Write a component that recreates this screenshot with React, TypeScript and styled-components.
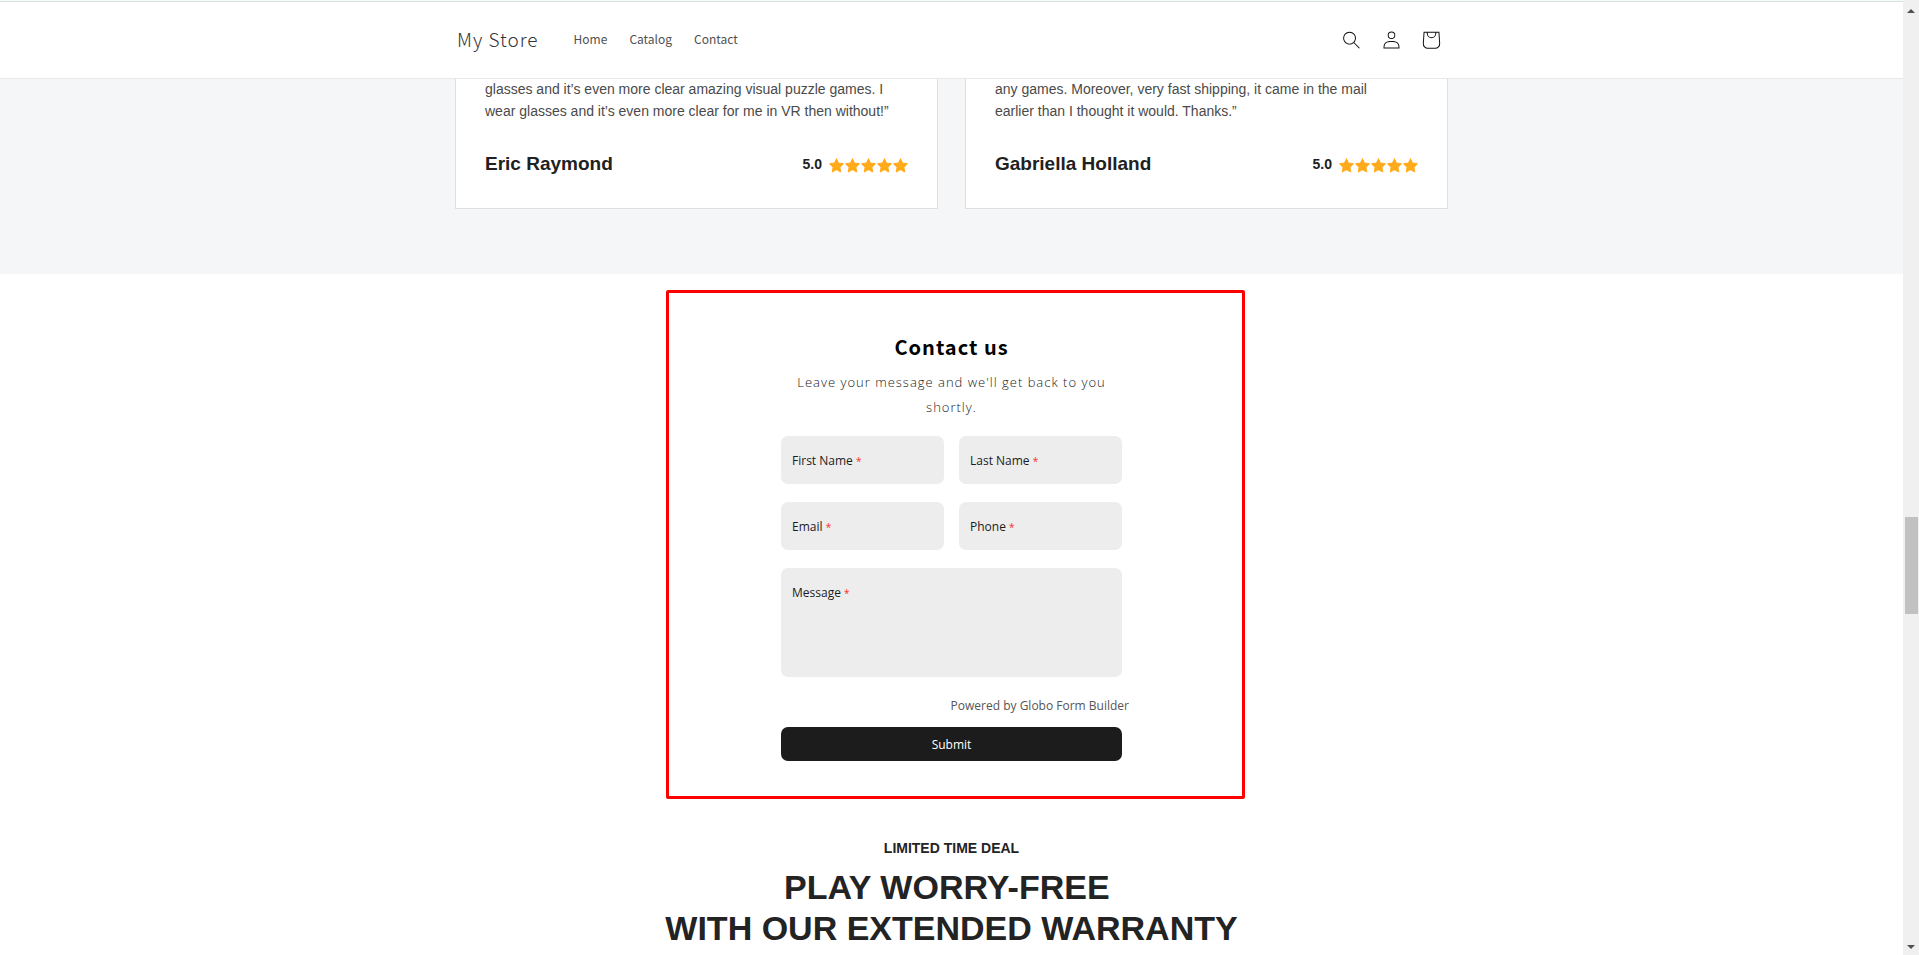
import React from "react";
import styled, { createGlobalStyle } from "styled-components";

const GlobalStyle = createGlobalStyle`
  *, *::before, *::after { box-sizing: border-box; }
  body { margin: 0; background: #fff; }
  h1, h2, h3, p, ul { margin: 0; padding: 0; }
`;

const storeFont = `"Noto Sans CJK SC", "Noto Sans", sans-serif`;
const bodyFont = `"Liberation Sans", Arial, sans-serif`;
const formFont = `"Open Sans", "Noto Sans", sans-serif`;

const Viewport = styled.div`
  display: grid;
  grid-template-columns: 1fr 16px;
  height: 100vh;
  overflow: hidden;
`;

const Page = styled.div`
  min-width: 0;
  min-height: 0;
  overflow: hidden;
`;

const TopStrip = styled.div`
  height: 2px;
  border-bottom: 1px solid #d8e2e1;
  background: #f3faf8;
`;

const Header = styled.header`
  border-bottom: 1px solid #e8e8e8;
  background: #fff;
`;

const Container = styled.div`
  width: 100%;
  max-width: 993px;
  margin: 0 auto;
`;

const HeaderRow = styled(Container)`
  display: flex;
  align-items: center;
  height: 76px;
  padding-left: 2px;
  font-family: ${storeFont};
`;

const Brand = styled.a`
  padding-bottom: 2px;
  color: #333;
  font-size: 19px;
  font-weight: 300;
  line-height: 32px;
  letter-spacing: 1px;
  text-decoration: none;
`;

const Nav = styled.nav`
  display: flex;
  gap: 22px;
  margin-left: 35px;
  padding-bottom: 2px;
`;

const NavLink = styled.a`
  color: #505050;
  font-size: 12px;
  line-height: 20px;
  text-decoration: none;
`;

const HeaderIcons = styled.div`
  display: flex;
  margin: 0 -3px 0 auto;
`;

const IconButton = styled.button`
  display: grid;
  place-items: center;
  width: 40px;
  height: 40px;
  padding: 0;
  border: 0;
  background: none;
  color: #121212;
`;

const Reviews = styled.section`
  padding-bottom: 65px;
  background: #f5f6f8;
`;

const ReviewGrid = styled(Container)`
  display: grid;
  grid-template-columns: 1fr 1fr;
  gap: 27px;
`;

const ReviewCard = styled.article`
  padding: 0 29px 32px;
  border: 1px solid #dcdfe3;
  border-top: 0;
  background: #fff;
  font-family: ${bodyFont};
`;

const Quote = styled.p`
  margin-top: -1px;
  color: #4a4a4a;
  font-size: 14px;
  line-height: 22px;
`;

const ReviewFooter = styled.div`
  display: flex;
  align-items: center;
  justify-content: space-between;
  margin-top: 30px;
`;

const Author = styled.h3`
  color: #212121;
  font-size: 19px;
  line-height: 24px;
`;

const Rating = styled.div`
  display: flex;
  align-items: center;
  gap: 7px;
  color: #212121;
  font-size: 14px;
  font-weight: 700;
  line-height: 24px;
`;

const Stars = styled.span`
  display: flex;
  gap: 1px;
  padding-top: 3px;
`;

const Contact = styled.section`
  display: flex;
  justify-content: center;
  padding-top: 16px;
`;

const ContactPanel = styled.div`
  position: relative;
  display: flex;
  justify-content: center;
  width: 571px;
  padding: 41px 0 38px;
`;

const Highlight = styled.div`
  position: absolute;
  inset: 0 -8px 0 0;
  border: 3px solid #f00;
  border-radius: 2px;
  pointer-events: none;
`;

const Form = styled.form`
  width: 341px;
  font-family: ${formFont};
`;

const FormTitle = styled.h2`
  color: #000;
  font-family: ${storeFont};
  font-size: 20px;
  line-height: 32px;
  letter-spacing: 1px;
  text-align: center;
`;

const FormIntro = styled.p`
  margin: 7px 16px 16px;
  color: #222;
  font-size: 13px;
  font-weight: 300;
  line-height: 25px;
  letter-spacing: 1px;
  text-align: center;
`;

const FieldGrid = styled.div`
  display: grid;
  grid-template-columns: 1fr 1fr;
  gap: 18px 15px;
`;

const FieldBox = styled.div<{ $wide?: boolean }>`
  position: relative;
  display: grid;
  grid-column: ${(p) => (p.$wide ? "1 / -1" : "auto")};
`;

const FieldLabel = styled.label`
  position: absolute;
  top: 16px;
  left: 11px;
  color: #1c1c1c;
  font-size: 12px;
  line-height: 18px;
  pointer-events: none;
`;

const Required = styled.span`
  color: #ff2a2a;
  font-size: 10px;
`;

const Input = styled.input`
  width: 100%;
  height: 48px;
  padding: 14px 11px;
  border: 0;
  border-radius: 7px;
  background: #ededed;
  font: 12px ${formFont};
`;

const TextArea = styled.textarea`
  width: 100%;
  height: 109px;
  padding: 14px 11px;
  border: 0;
  border-radius: 7px;
  background: #ededed;
  font: 12px ${formFont};
  resize: none;
`;

const Powered = styled.a`
  display: block;
  margin: 19px -7px 11px 0;
  color: #555;
  font-size: 12px;
  line-height: 20px;
  text-align: right;
  text-decoration: none;
`;

const Submit = styled.button`
  display: block;
  width: 100%;
  padding: 9px 8px 7px;
  border: 0;
  border-radius: 7px;
  background: #1c1c1c;
  color: #fff;
  font-family: ${formFont};
  font-size: 12px;
  line-height: 18px;
`;

const Promo = styled.section`
  padding-top: 39px;
  color: #232323;
  font-family: ${bodyFont};
  text-align: center;
`;

const PromoTag = styled.p`
  font-size: 14px;
  font-weight: 700;
  line-height: 20px;
`;

const PromoTitle = styled.h2`
  margin-top: 9px;
  font-size: 34px;
  line-height: 41px;
`;

const ScrollBar = styled.div`
  display: grid;
  grid-template-rows: 22px 1fr 17px;
  background: #f0f0f0;
`;

const ScrollArrow = styled.span<{ $down?: boolean }>`
  align-self: center;
  justify-self: center;
  border: 4px solid transparent;
  border-top-width: ${(p) => (p.$down ? "4px" : "0")};
  border-bottom-width: ${(p) => (p.$down ? "0" : "4px")};
  border-top-color: ${(p) => (p.$down ? "#505050" : "transparent")};
  border-bottom-color: ${(p) => (p.$down ? "transparent" : "#505050")};
`;

const ScrollTrack = styled.div`
  display: grid;
  grid-template-rows: 495fr 97fr 324fr;
  padding: 0 1px 0 2px;
`;

const ScrollThumb = styled.div`
  grid-row: 2;
  background: #c1c1c1;
`;

const SearchIcon = () => (
  <svg width="17" height="18" viewBox="0 0 18 19" fill="currentColor" aria-hidden="true">
    <path
      fillRule="evenodd"
      d="M11.03 11.68A5.784 5.784 0 112.85 3.5a5.784 5.784 0 018.18 8.18zm.26 1.12a6.78 6.78 0 11.72-.7l5.4 5.4a.5.5 0 11-.71.7l-5.41-5.4z"
    />
  </svg>
);

const AccountIcon = () => (
  <svg width="17" height="18" viewBox="0 0 18 19" fill="currentColor" aria-hidden="true">
    <path
      fillRule="evenodd"
      d="M6 4.5a3 3 0 116 0 3 3 0 01-6 0zm3-4a4 4 0 100 8 4 4 0 000-8zm5.58 12.15c1.12.83 1.83 2.24 1.91 4.85H1.51c.08-2.6.79-4.02 1.9-4.85C4.66 11.75 6.5 11.5 9 11.5s4.35.26 5.58 1.15zM9 10.5c-2.5 0-4.65.24-6.17 1.35C1.27 12.98.5 14.93.5 18v.5h17V18c0-3.07-.77-5.02-2.33-6.15-1.52-1.1-3.67-1.35-6.17-1.35z"
    />
  </svg>
);

const CartIcon = () => (
  <svg width="40" height="40" viewBox="0 0 40 40" fill="currentColor" aria-hidden="true">
    <path
      fillRule="evenodd"
      d="M15.75 11.8h-3.16l-.77 11.6a5 5 0 0 0 4.99 5.34h7.38a5 5 0 0 0 4.99-5.33l-.78-11.61zm0 1h-2.22l-.71 10.67a4 4 0 0 0 3.99 4.27h7.38a4 4 0 0 0 4-4.27l-.72-10.67h-2.22v.63a4.75 4.75 0 1 1-9.5 0zm8.5 0h-7.5v.63a3.75 3.75 0 1 0 7.5 0z"
    />
  </svg>
);

const StarIcon = () => (
  <svg width="15" height="15" viewBox="0 0 14 14" fill="#ffab1a" aria-hidden="true">
    <path
      d="M7 .8l1.9 4 4.4.6-3.2 3.1.8 4.4L7 10.8l-3.9 2.1.8-4.4L.7 5.4l4.4-.6z"
      stroke="#ffab1a"
      strokeWidth="1"
      strokeLinejoin="round"
    />
  </svg>
);

interface Review {
  lines: string[];
  author: string;
}

const reviews: Review[] = [
  {
    lines: [
      "glasses and it’s even more clear amazing visual puzzle games. I",
      "wear glasses and it’s even more clear for me in VR then without!”",
    ],
    author: "Eric Raymond",
  },
  {
    lines: [
      "any games. Moreover, very fast shipping, it came in the mail",
      "earlier than I thought it would. Thanks.”",
    ],
    author: "Gabriella Holland",
  },
];

const fields = [
  { id: "first-name", label: "First Name", type: "text" },
  { id: "last-name", label: "Last Name", type: "text" },
  { id: "email", label: "Email", type: "email" },
  { id: "phone", label: "Phone", type: "tel" },
];

export default function App() {
  return (
    <>
      <GlobalStyle />
      <Viewport>
        <Page>
          <TopStrip />
          <Header>
            <HeaderRow>
              <Brand href="#">My Store</Brand>
              <Nav>
                <NavLink href="#">Home</NavLink>
                <NavLink href="#">Catalog</NavLink>
                <NavLink href="#">Contact</NavLink>
              </Nav>
              <HeaderIcons>
                <IconButton type="button" aria-label="Search">
                  <SearchIcon />
                </IconButton>
                <IconButton type="button" aria-label="Account">
                  <AccountIcon />
                </IconButton>
                <IconButton type="button" aria-label="Cart">
                  <CartIcon />
                </IconButton>
              </HeaderIcons>
            </HeaderRow>
          </Header>

          <Reviews>
            <ReviewGrid>
              {reviews.map((review) => (
                <ReviewCard key={review.author}>
                  <Quote>
                    {review.lines[0]}
                    <br />
                    {review.lines[1]}
                  </Quote>
                  <ReviewFooter>
                    <Author>{review.author}</Author>
                    <Rating>
                      5.0
                      <Stars>
                        {[1, 2, 3, 4, 5].map((n) => (
                          <StarIcon key={n} />
                        ))}
                      </Stars>
                    </Rating>
                  </ReviewFooter>
                </ReviewCard>
              ))}
            </ReviewGrid>
          </Reviews>

          <Contact>
            <ContactPanel>
              <Form>
                <FormTitle>Contact us</FormTitle>
                <FormIntro>Leave your message and we'll get back to you shortly.</FormIntro>
                <FieldGrid>
                  {fields.map((field) => (
                    <FieldBox key={field.id}>
                      <Input id={field.id} type={field.type} required />
                      <FieldLabel htmlFor={field.id}>
                        {field.label} <Required>*</Required>
                      </FieldLabel>
                    </FieldBox>
                  ))}
                  <FieldBox $wide>
                    <TextArea id="message" required />
                    <FieldLabel htmlFor="message">
                      Message <Required>*</Required>
                    </FieldLabel>
                  </FieldBox>
                </FieldGrid>
                <Powered href="#">Powered by Globo Form Builder</Powered>
                <Submit type="submit">Submit</Submit>
              </Form>
              <Highlight />
            </ContactPanel>
          </Contact>

          <Promo>
            <PromoTag>LIMITED TIME DEAL</PromoTag>
            <PromoTitle>
              PLAY WORRY-FREE&nbsp;
              <br />
              WITH OUR EXTENDED WARRANTY
            </PromoTitle>
          </Promo>
        </Page>
        <ScrollBar aria-hidden="true">
          <ScrollArrow />
          <ScrollTrack>
            <ScrollThumb />
          </ScrollTrack>
          <ScrollArrow $down />
        </ScrollBar>
      </Viewport>
    </>
  );
}
